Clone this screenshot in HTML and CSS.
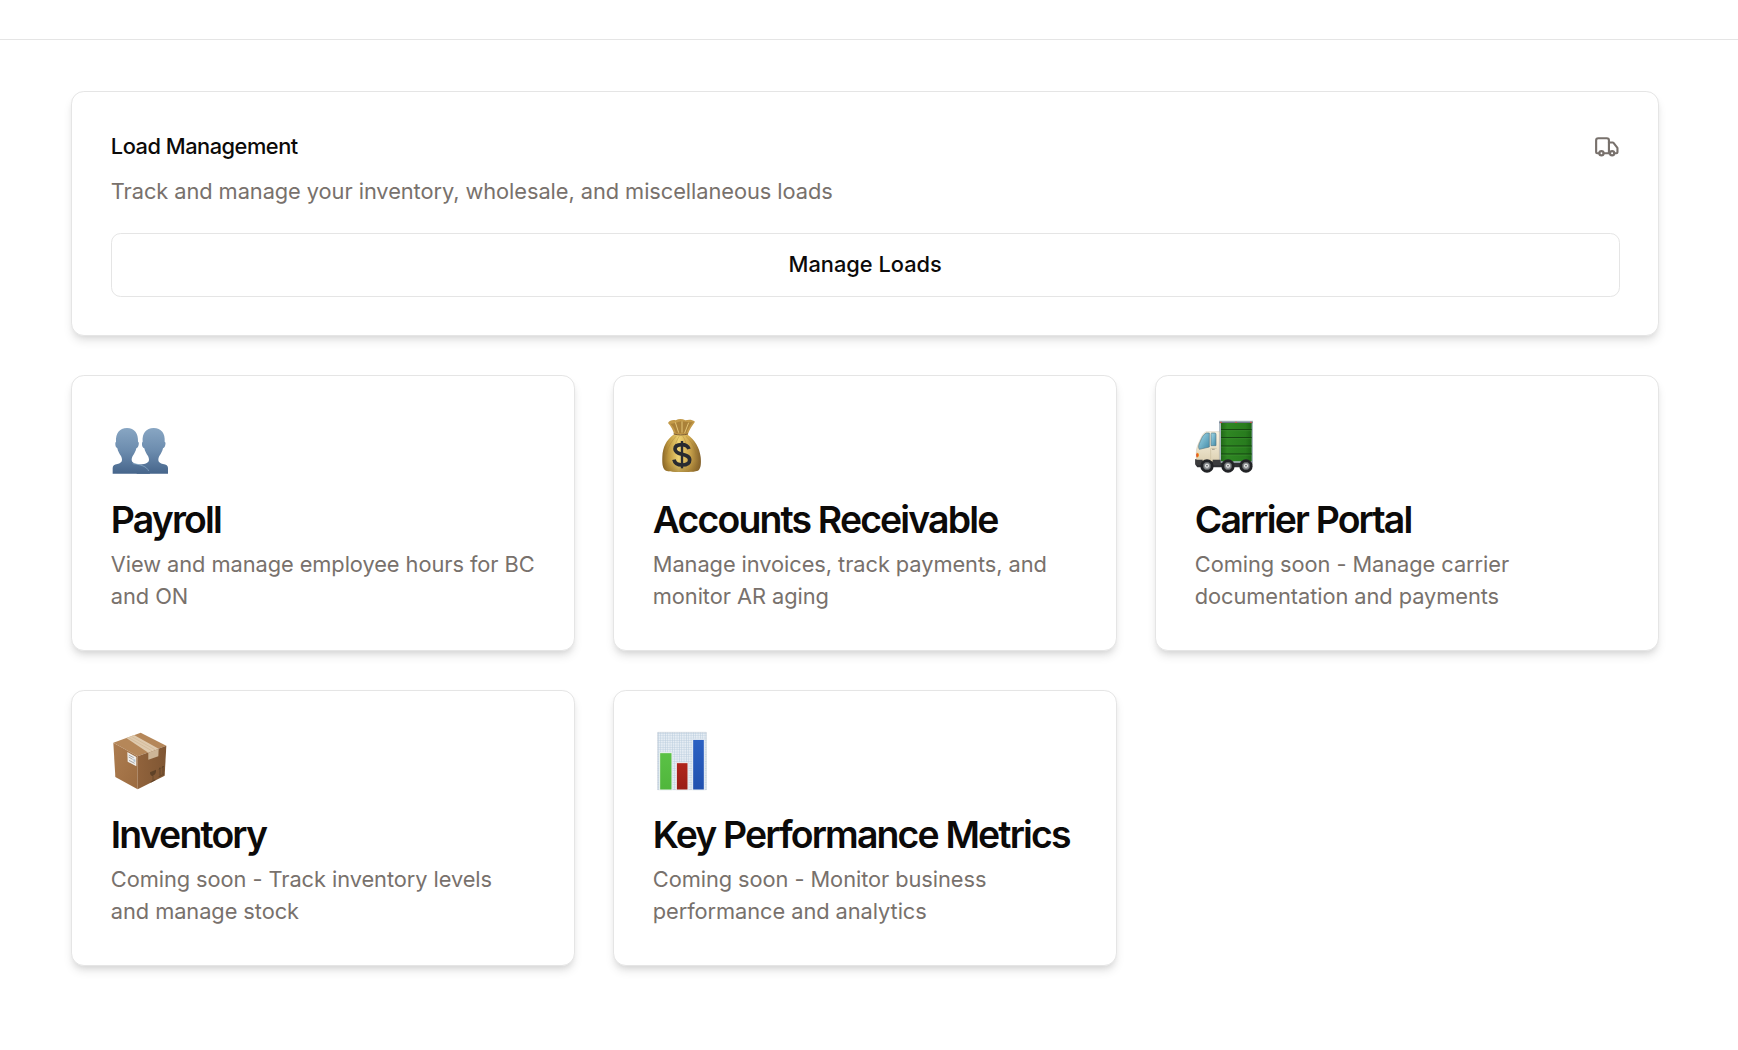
FILE: index.html
```
<!DOCTYPE html>
<html lang="en">
<head>
<meta charset="utf-8">
<title>Dashboard</title>
<link rel="stylesheet" href="styles.css">
</head>
<body>
<header class="topbar"></header>
<main class="page">
  <section class="card">
    <div class="load-head">
      <h3 class="load-title">Load Management</h3>
      <svg class="load-icon" viewBox="0 0 24 24" fill="none" stroke="currentColor" stroke-width="2" stroke-linecap="round" stroke-linejoin="round"><path d="M14 18V6a2 2 0 0 0-2-2H4a2 2 0 0 0-2 2v11a1 1 0 0 0 1 1h2"/><path d="M15 18H9"/><path d="M19 18h2a1 1 0 0 0 1-1v-3.65a1 1 0 0 0-.22-.624l-3.48-4.35A1 1 0 0 0 17.52 8H14"/><circle cx="17" cy="18" r="2"/><circle cx="7" cy="18" r="2"/></svg>
    </div>
    <p class="desc">Track and manage your inventory, wholesale, and miscellaneous loads</p>
    <button class="button">Manage Loads</button>
  </section>
  <div class="grid">
    <section class="card">
      <svg class="emoji" viewBox="33 -2 192 192">
        <defs>
          <linearGradient id="bust" gradientUnits="userSpaceOnUse" x1="0" y1="40" x2="0" y2="177"><stop offset="0" stop-color="#88a6c3"/><stop offset=".5" stop-color="#6c8cae"/><stop offset="1" stop-color="#46658b"/></linearGradient>
        </defs>
        <path fill="url(#bust)" d="M110 177v-24c5-3 13-4 22-5 8-2 15-5 15-12 0-5-1-7-3-12-5-7-9-14-11-23-5-2-7-5-7-12 0-4 0-6 2-8-2-25 10-41 33-41s35 16 33 41c3 2 3 5 2 9-1 6-3 9-7 11-2 9-6 16-11 23-2 5-3 7-3 12 0 7 6 10 14 12 10 2 15 5 15 12v17z"/>
        <path fill="url(#bust)" d="M38 177v-17c0-7 5-10 14-12 8-2 14-5 14-12 0-5-1-7-3-12-5-7-9-14-11-23-4-2-6-6-6-12 0-4 0-6 2-8-1-25 10-41 33-41s34 16 33 41c3 2 3 5 2 9-1 6-3 9-7 11-2 9-6 16-11 23-2 5-3 7-3 12 0 7 6 10 15 12 20 3 32 9 38 22l2 7z"/>
        <path d="M98 147c24 2 43 9 48 22" fill="none" stroke="#91b3cf" stroke-width="2"/>
      </svg>
      <h3 class="title">Payroll</h3>
      <p class="desc">View and manage employee hours for BC and ON</p>
    </section>
    <section class="card">
      <svg class="emoji" viewBox="9 13 192 192">
        <defs>
          <linearGradient id="bag" x1="0" x2="1" y1="0" y2="0"><stop offset="0" stop-color="#8a6728"/><stop offset=".16" stop-color="#bd963e"/><stop offset=".42" stop-color="#eed373"/><stop offset=".68" stop-color="#d2ab4f"/><stop offset="1" stop-color="#82602a"/></linearGradient>
          <linearGradient id="bagShade" x1="0" x2="0" y1="0" y2="1"><stop offset=".7" stop-color="#75521b" stop-opacity="0"/><stop offset="1" stop-color="#75521b" stop-opacity=".45"/></linearGradient>
        </defs>
        <path fill="url(#bag)" d="M70 75C50 90 38 112 37 141c-1 20 1 32 7 39 7 6 22 7 51 7s47-1 52-7c5-6 7-19 5-38-3-28-18-52-39-67z"/>
        <path fill="url(#bagShade)" d="M70 75C50 90 38 112 37 141c-1 20 1 32 7 39 7 6 22 7 51 7s47-1 52-7c5-6 7-19 5-38-3-28-18-52-39-67z"/>
        <path d="M79 79c-14 15-25 31-30 55M88 79c-7 12-11 21-14 32M107 79c15 14 28 33 31 56M98 79c7 10 10 20 12 30" fill="none" stroke="#9f782f" stroke-width="1.6" opacity=".65"/>
        <path fill="#c39a49" d="M54 40c5-8 14-10 23-8 10-6 20-5 29 0 10-3 20-3 29 4-7 10-17 24-22 39H73C69 61 63 49 54 40z"/>
        <path fill="#aa8139" d="M61 42c15 1 24-6 33-7 12 1 22 4 35 2-8 8-16 20-20 34H78c-3-12-8-22-17-29z"/>
        <path fill="none" stroke="#e3c476" stroke-width="3" d="M76 38l10 31M96 35v34M116 39l-12 31"/>
        <path fill="none" stroke="#7d5b2b" stroke-width="3" stroke-linecap="round" d="M72 73c13 4 27 4 41 0"/>
        <path fill="none" stroke="#292b31" stroke-width="11" d="M117 118c-3-9-11-13-22-13-13 0-20 5-20 13 0 9 9 13 21 16s23 6 23 17c0 10-9 15-23 15s-22-6-24-16"/>
        <path stroke="#292b31" stroke-width="7" d="M96 94v82"/>
      </svg>
      <h3 class="title">Accounts Receivable</h3>
      <p class="desc">Manage invoices, track payments, and monitor AR aging</p>
    </section>
    <section class="card">
      <svg class="emoji" viewBox="30 13 192 192">
        <defs>
          <linearGradient id="cargo" x1="0" x2="1"><stop offset="0" stop-color="#226818"/><stop offset=".2" stop-color="#2f8723"/><stop offset=".8" stop-color="#287c1e"/><stop offset="1" stop-color="#1c6715"/></linearGradient>
          <linearGradient id="cab" x1="0" x2="0" y1="0" y2="1"><stop offset="0" stop-color="#fbf6e5"/><stop offset="1" stop-color="#ddd1b3"/></linearGradient>
          <linearGradient id="glass" x1="0" x2="1" y1="0" y2="1"><stop offset="0" stop-color="#a3dae9"/><stop offset="1" stop-color="#438ba8"/></linearGradient>
        </defs>
        <path fill="#303135" d="M31 148h171v16l-5 9H37l-6-8z"/>
        <path fill="#aebbc5" d="M102 33h102v126H102z"/>
        <path fill="#6e7686" d="M103 36h100v5H103z"/>
        <path fill="url(#cargo)" d="M108 40h92v115h-92z"/>
        <path stroke="#123f10" stroke-width="3" d="M108 60h92M108 84h92M108 109h92M108 133h92"/>
        <path stroke="#56a947" stroke-width="1" d="M108 63h92M108 87h92M108 112h92M108 136h92"/>
        <path fill="#e84c3f" d="M106 36h4v4h-4zM151 36h4v4h-4zM196 36h4v4h-4z"/>
        <path fill="url(#cab)" stroke="#bbae92" d="M64 66h39v90H34v-30c0-8 3-17 8-28 7-16 12-28 22-32z"/>
        <path fill="url(#glass)" stroke="#557987" stroke-width="2" d="M64 70h9v42l-30 7c-4-7-2-14 3-24 5-12 9-21 18-25z"/>
        <path fill="url(#glass)" stroke="#557987" stroke-width="2" d="M80 70h10q3 0 3 4v34H78V74q0-4 2-4z"/>
        <path d="M77 116v37M78 116h17" stroke="#c9bd9d" stroke-width="2"/>
        <path d="M81 119h8" stroke="#817b70" stroke-width="2"/>
        <path fill="#f49120" d="M35 129q8 1 7 8t-7 7z"/><path fill="#d94427" d="M34 132h4v9h-4z"/>
        <path fill="#3b3b3d" d="M31 150h22v16H35l-4-4zM83 150h24v16H83z"/>
        <g fill="#222326"><circle cx="66" cy="169" r="20"/><circle cx="129" cy="169" r="20"/><circle cx="183" cy="169" r="20"/></g>
        <g fill="#8d9093" stroke="#55585b" stroke-width="2"><circle cx="66" cy="169" r="11"/><circle cx="129" cy="169" r="11"/><circle cx="183" cy="169" r="11"/></g>
        <g fill="#ececec"><circle cx="66" cy="168" r="6"/><circle cx="129" cy="168" r="6"/><circle cx="183" cy="168" r="6"/></g>
        <g fill="#5c5e61"><circle cx="66" cy="168" r="2.5"/><circle cx="129" cy="168" r="2.5"/><circle cx="183" cy="168" r="2.5"/></g>
      </svg>
      <h3 class="title">Carrier Portal</h3>
      <p class="desc">Coming soon - Manage carrier documentation and payments</p>
    </section>
    <section class="card">
      <svg class="emoji" viewBox="33 15 192 192">
        <defs>
          <linearGradient id="boxLeft" x1="0" x2="1" y1="0" y2="1"><stop offset="0" stop-color="#ad7d50"/><stop offset="1" stop-color="#9b6b40"/></linearGradient>
          <linearGradient id="boxRight" x1="0" x2="1"><stop offset="0" stop-color="#91633c"/><stop offset="1" stop-color="#7f5633"/></linearGradient>
        </defs>
        <path fill="#b58759" d="M40 56l82-30 77 39-86 32z"/>
        <path fill="url(#boxLeft)" d="M40 56l73 41v99l-67-37z"/>
        <path fill="url(#boxRight)" d="M113 97l86-32-5 90-81 41z"/>
        <path fill="#dfcaae" d="M79 42l23-9 74 41-31 12z"/>
        <path fill="#cdb596" d="M145 86l31-12-1 23-30 10z"/>
        <path d="M86 41l69 39M94 37l71 40" stroke="#cfb592" stroke-width="2"/>
        <path fill="#f0eeea" d="M82 84l27 15v28l-26-14z"/>
        <path stroke="#a6a5a7" stroke-width="3" d="M86 93l15 8M86 99l12 7M87 109l17 9"/>
        <path fill="#b3c3d0" d="M100 104l6 3v8l-6-3z"/>
        <path fill="#5f4227" d="M150 145l18-8c1 10-3 15-8 17v14l6-2v3l-14 7v-3l6-3v-14c-5 0-8-3-8-11z"/>
        <path fill="none" stroke="#5f4227" stroke-width="2.5" d="M176 158l17-8M180 154v-21M189 150v-22M177 137l3-6 3 3M186 132l3-6 3 3"/>
      </svg>
      <h3 class="title">Inventory</h3>
      <p class="desc">Coming soon - Track inventory levels<br>and manage stock</p>
    </section>
    <section class="card">
      <svg class="emoji" viewBox="9 15 192 192">
        <defs>
          <pattern id="gridlines" width="7" height="7" patternUnits="userSpaceOnUse" x="24" y="27"><path d="M0 0h7M0 0v7" stroke="#b8cbdc" stroke-width="2.8"/></pattern>
          <linearGradient id="green" x1="0" x2="0" y1="0" y2="1"><stop offset="0" stop-color="#5bc246"/><stop offset="1" stop-color="#50b63c"/></linearGradient>
          <linearGradient id="red" x1="0" x2="0" y1="0" y2="1"><stop offset="0" stop-color="#b1261c"/><stop offset="1" stop-color="#991d17"/></linearGradient>
          <linearGradient id="blue" x1="0" x2="0" y1="0" y2="1"><stop offset="0" stop-color="#2b61c3"/><stop offset="1" stop-color="#2050ae"/></linearGradient>
        </defs>
        <path fill="#e6edf4" d="M22 24h148v174H22z"/><path fill="url(#gridlines)" d="M22 24h148v174H22z"/>
        <path fill="none" stroke="#ced5dc" stroke-width="2" d="M23 25h146v172H23z"/>
        <g stroke="#eff3f5" stroke-width="3"><path fill="url(#green)" d="M29 86h37v112H29z"/><path fill="url(#red)" d="M79 116h35v82H79z"/><path fill="url(#blue)" d="M128 46h35v152h-35z"/></g>
      </svg>
      <h3 class="title">Key Performance Metrics</h3>
      <p class="desc">Coming soon - Monitor business performance and analytics</p>
    </section>
  </div>
</main>
</body>
</html>
```
FILE: styles.css
```
* { box-sizing: border-box; margin: 0; }
body { background: #fff; color: #0c0a09; font-family: Inter, "Liberation Sans", sans-serif; font-size: 21.8px; line-height: 32px; }
.topbar { height: 40px; border-bottom: 1px solid #e5e5e5; }
.page { display: flex; flex-direction: column; gap: 38.6px; padding: 51.2px 79px 51.2px 71.4px; }
.card { border: 1px solid #e5e5e5; border-radius: 12.8px; background: #fff; padding: 38.4px; box-shadow: 0 6.4px 9.6px -1.6px rgb(0 0 0 / .1), 0 3.2px 6.4px -3.2px rgb(0 0 0 / .1); }
.load-head { display: flex; align-items: center; justify-content: space-between; height: 30.6px; margin-bottom: 14.1px; }
.load-title { font-size: 21.8px; font-weight: 500; letter-spacing: -.48px; }
.load-icon { width: 25.6px; height: 25.6px; margin-top: 1px; color: #78716c; }
.desc { color: #78716c; letter-spacing: -.06px; }
.button { display: block; width: 100%; height: 64px; margin-top: 25.4px; padding: 0 0 1px; border: 1px solid #e5e5e5; border-radius: 9.6px; background: #fff; color: inherit; font: inherit; font-weight: 500; }
.grid { display: grid; grid-template-columns: repeat(3, 1fr); gap: 38.4px; }
.emoji { display: block; width: 64px; height: 64px; margin-bottom: 22.8px; overflow: visible; }
.title { margin-bottom: 8.6px; font-size: 37.4px; font-weight: 600; line-height: 38.4px; letter-spacing: -1.84px; white-space: nowrap; }
```
